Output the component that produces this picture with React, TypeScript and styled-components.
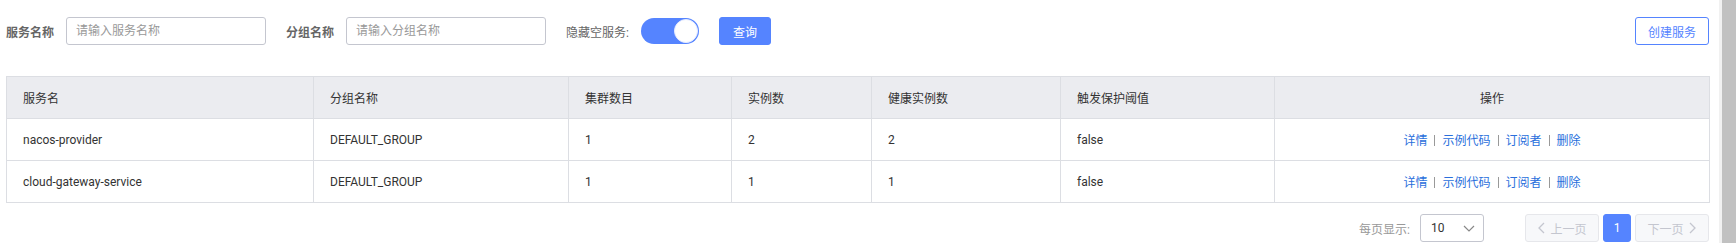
import styled, { createGlobalStyle } from "styled-components";

const GlobalStyle = createGlobalStyle`
  html, body {
    margin: 0;
    padding: 0;
    overflow: hidden;
    background: #fff;
  }
  body {
    font-family: Roboto, "Noto Sans CJK SC", sans-serif;
    font-size: 12px;
    color: #333;
  }
`;

const services = [
  { name: "nacos-provider", group: "DEFAULT_GROUP", clusters: 1, instances: 2, healthy: 2, threshold: "false" },
  { name: "cloud-gateway-service", group: "DEFAULT_GROUP", clusters: 1, instances: 1, healthy: 1, threshold: "false" },
];

const columns = [
  { title: "服务名", width: 307 },
  { title: "分组名称", width: 255 },
  { title: "集群数目", width: 163 },
  { title: "实例数", width: 140 },
  { title: "健康实例数", width: 189 },
  { title: "触发保护阈值", width: 214 },
  { title: "操作", width: 435, center: true },
];

const actions = ["详情", "示例代码", "订阅者", "删除"];

export default function App() {
  return (
    <Page>
      <GlobalStyle />
      <Main>
        <Toolbar>
          <Filters>
            <Field>
              <Label>服务名称</Label>
              <Input placeholder="请输入服务名称" />
            </Field>
            <Field>
              <Label>分组名称</Label>
              <Input placeholder="请输入分组名称" />
            </Field>
            <Field>
              <Label $plain>隐藏空服务:</Label>
              <Switch>
                <Knob />
              </Switch>
            </Field>
            <PrimaryButton>查询</PrimaryButton>
          </Filters>
          <OutlineButton>创建服务</OutlineButton>
        </Toolbar>

        <Table>
          <colgroup>
            {columns.map((c) => (
              <col key={c.title} style={{ width: c.width }} />
            ))}
          </colgroup>
          <thead>
            <tr>
              {columns.map((c) => (
                <Th key={c.title} $center={c.center}>
                  {c.title}
                </Th>
              ))}
            </tr>
          </thead>
          <tbody>
            {services.map((s) => (
              <tr key={s.name}>
                <Td>{s.name}</Td>
                <Td>{s.group}</Td>
                <Td>{s.clusters}</Td>
                <Td>{s.instances}</Td>
                <Td>{s.healthy}</Td>
                <Td>{s.threshold}</Td>
                <Td $center>
                  {actions.map((a, i) => (
                    <span key={a}>
                      {i > 0 && <Sep />}
                      <ActionLink>{a}</ActionLink>
                    </span>
                  ))}
                </Td>
              </tr>
            ))}
          </tbody>
        </Table>

        <Pagination>
          <PageSize>
            <PageSizeLabel>每页显示:</PageSizeLabel>
            <Select>
              <span>10</span>
              <svg width="12" height="7" viewBox="0 0 12 7">
                <polyline points="1,1 6,6 11,1" fill="none" stroke="#888" strokeWidth="1.2" />
              </svg>
            </Select>
          </PageSize>
          <Pager>
            <PagerButton disabled>
              <svg width="8" height="12" viewBox="0 0 8 12">
                <polyline points="7,1 2,6 7,11" fill="none" stroke="#c4c6cf" strokeWidth="1.3" />
              </svg>
              上一页
            </PagerButton>
            <PageNumber $active>1</PageNumber>
            <PagerButton disabled>
              下一页
              <svg width="8" height="12" viewBox="0 0 8 12">
                <polyline points="1,1 6,6 1,11" fill="none" stroke="#c4c6cf" strokeWidth="1.3" />
              </svg>
            </PagerButton>
          </Pager>
        </Pagination>
      </Main>
      <ScrollTrack>
        <ScrollThumb />
      </ScrollTrack>
    </Page>
  );
}

const Page = styled.div`
  display: flex;
  height: 243px;
  overflow: hidden;
`;

const Main = styled.div`
  flex: 1;
  min-width: 0;
  padding: 17px 10px 0 6px;
  display: flex;
  flex-direction: column;
`;

const ScrollTrack = styled.div`
  width: 17px;
  flex-shrink: 0;
  background: #f1f1f1;
  display: flex;
  justify-content: flex-end;
`;

const ScrollThumb = styled.div`
  width: 14px;
  height: 100%;
  background: #c1c1c1;
`;

const Toolbar = styled.div`
  display: flex;
  justify-content: space-between;
  align-items: center;
  height: 28px;
`;

const Filters = styled.div`
  display: flex;
  align-items: center;
  gap: 20px;
`;

const Field = styled.div`
  display: flex;
  align-items: center;
  gap: 12px;
`;

const Label = styled.span<{ $plain?: boolean }>`
  font-size: 12px;
  color: #666;
  font-weight: ${(p) => (p.$plain ? 400 : 700)};
  white-space: nowrap;
`;

const Input = styled.input`
  box-sizing: border-box;
  width: 200px;
  height: 28px;
  padding: 0 9px;
  border: 1px solid #c4c6cf;
  border-radius: 3px;
  font-family: inherit;
  font-size: 12px;
  color: #333;
  outline: none;

  &::placeholder {
    color: #999;
  }
`;

const Switch = styled.div`
  box-sizing: border-box;
  width: 58px;
  height: 26px;
  border-radius: 13px;
  background: #5584ff;
  display: flex;
  align-items: center;
  justify-content: flex-end;
  padding: 0 1px;
`;

const Knob = styled.div`
  box-sizing: border-box;
  width: 24px;
  height: 24px;
  border-radius: 50%;
  background: #fff;
  border: 1px solid #e6ecff;
`;

const PrimaryButton = styled.button`
  box-sizing: border-box;
  height: 28px;
  padding: 0 13px;
  border: 1px solid #5584ff;
  border-radius: 3px;
  background: #5584ff;
  color: #fff;
  font-family: inherit;
  font-size: 12px;
`;

const OutlineButton = styled.button`
  box-sizing: border-box;
  height: 28px;
  width: 74px;
  padding: 0;
  border: 1px solid #5584ff;
  border-radius: 3px;
  background: #fff;
  color: #5584ff;
  font-family: inherit;
  font-size: 12px;
`;

const Table = styled.table`
  margin-top: 31px;
  width: 1703px;
  table-layout: fixed;
  border-collapse: collapse;
  border: 1px solid #dcdee3;
`;

const Th = styled.th<{ $center?: boolean }>`
  height: 41px;
  padding: 0 16px;
  background: #ebecf0;
  border: 1px solid #dcdee3;
  font-weight: 400;
  color: #333;
  text-align: ${(p) => (p.$center ? "center" : "left")};
`;

const Td = styled.td<{ $center?: boolean }>`
  height: 41px;
  padding: 0 16px;
  border: 1px solid #dcdee3;
  color: #333;
  text-align: ${(p) => (p.$center ? "center" : "left")};
`;

const ActionLink = styled.a`
  color: #2a6fdc;
  cursor: pointer;
`;

const Sep = styled.span`
  display: inline-block;
  width: 1px;
  height: 11px;
  margin: 0 7px;
  background: #999;
  vertical-align: -1px;
`;

const Pagination = styled.div`
  display: flex;
  justify-content: flex-end;
  align-items: center;
  margin-top: 11px;
  gap: 41px;
`;

const PageSize = styled.div`
  display: flex;
  align-items: center;
  gap: 10px;
`;

const PageSizeLabel = styled.span`
  color: #999;
`;

const Select = styled.div`
  box-sizing: border-box;
  width: 64px;
  height: 28px;
  padding: 0 8px 0 10px;
  border: 1px solid #c4c6cf;
  border-radius: 3px;
  display: flex;
  align-items: center;
  justify-content: space-between;
  color: #333;
`;

const Pager = styled.div`
  display: flex;
  align-items: center;
  gap: 4px;
`;

const PagerButton = styled.button`
  box-sizing: border-box;
  height: 28px;
  width: 74px;
  padding: 0;
  display: flex;
  align-items: center;
  justify-content: center;
  gap: 5px;
  border: 1px solid #e6e7eb;
  border-radius: 3px;
  background: #f7f8fa;
  color: #c4c6cf;
  font-family: inherit;
  font-size: 12px;
`;

const PageNumber = styled.button<{ $active?: boolean }>`
  box-sizing: border-box;
  width: 28px;
  height: 28px;
  padding: 0;
  border: 1px solid ${(p) => (p.$active ? "#5584ff" : "#c4c6cf")};
  border-radius: 3px;
  background: ${(p) => (p.$active ? "#5584ff" : "#fff")};
  color: ${(p) => (p.$active ? "#fff" : "#333")};
  font-family: inherit;
  font-size: 12px;
`;
